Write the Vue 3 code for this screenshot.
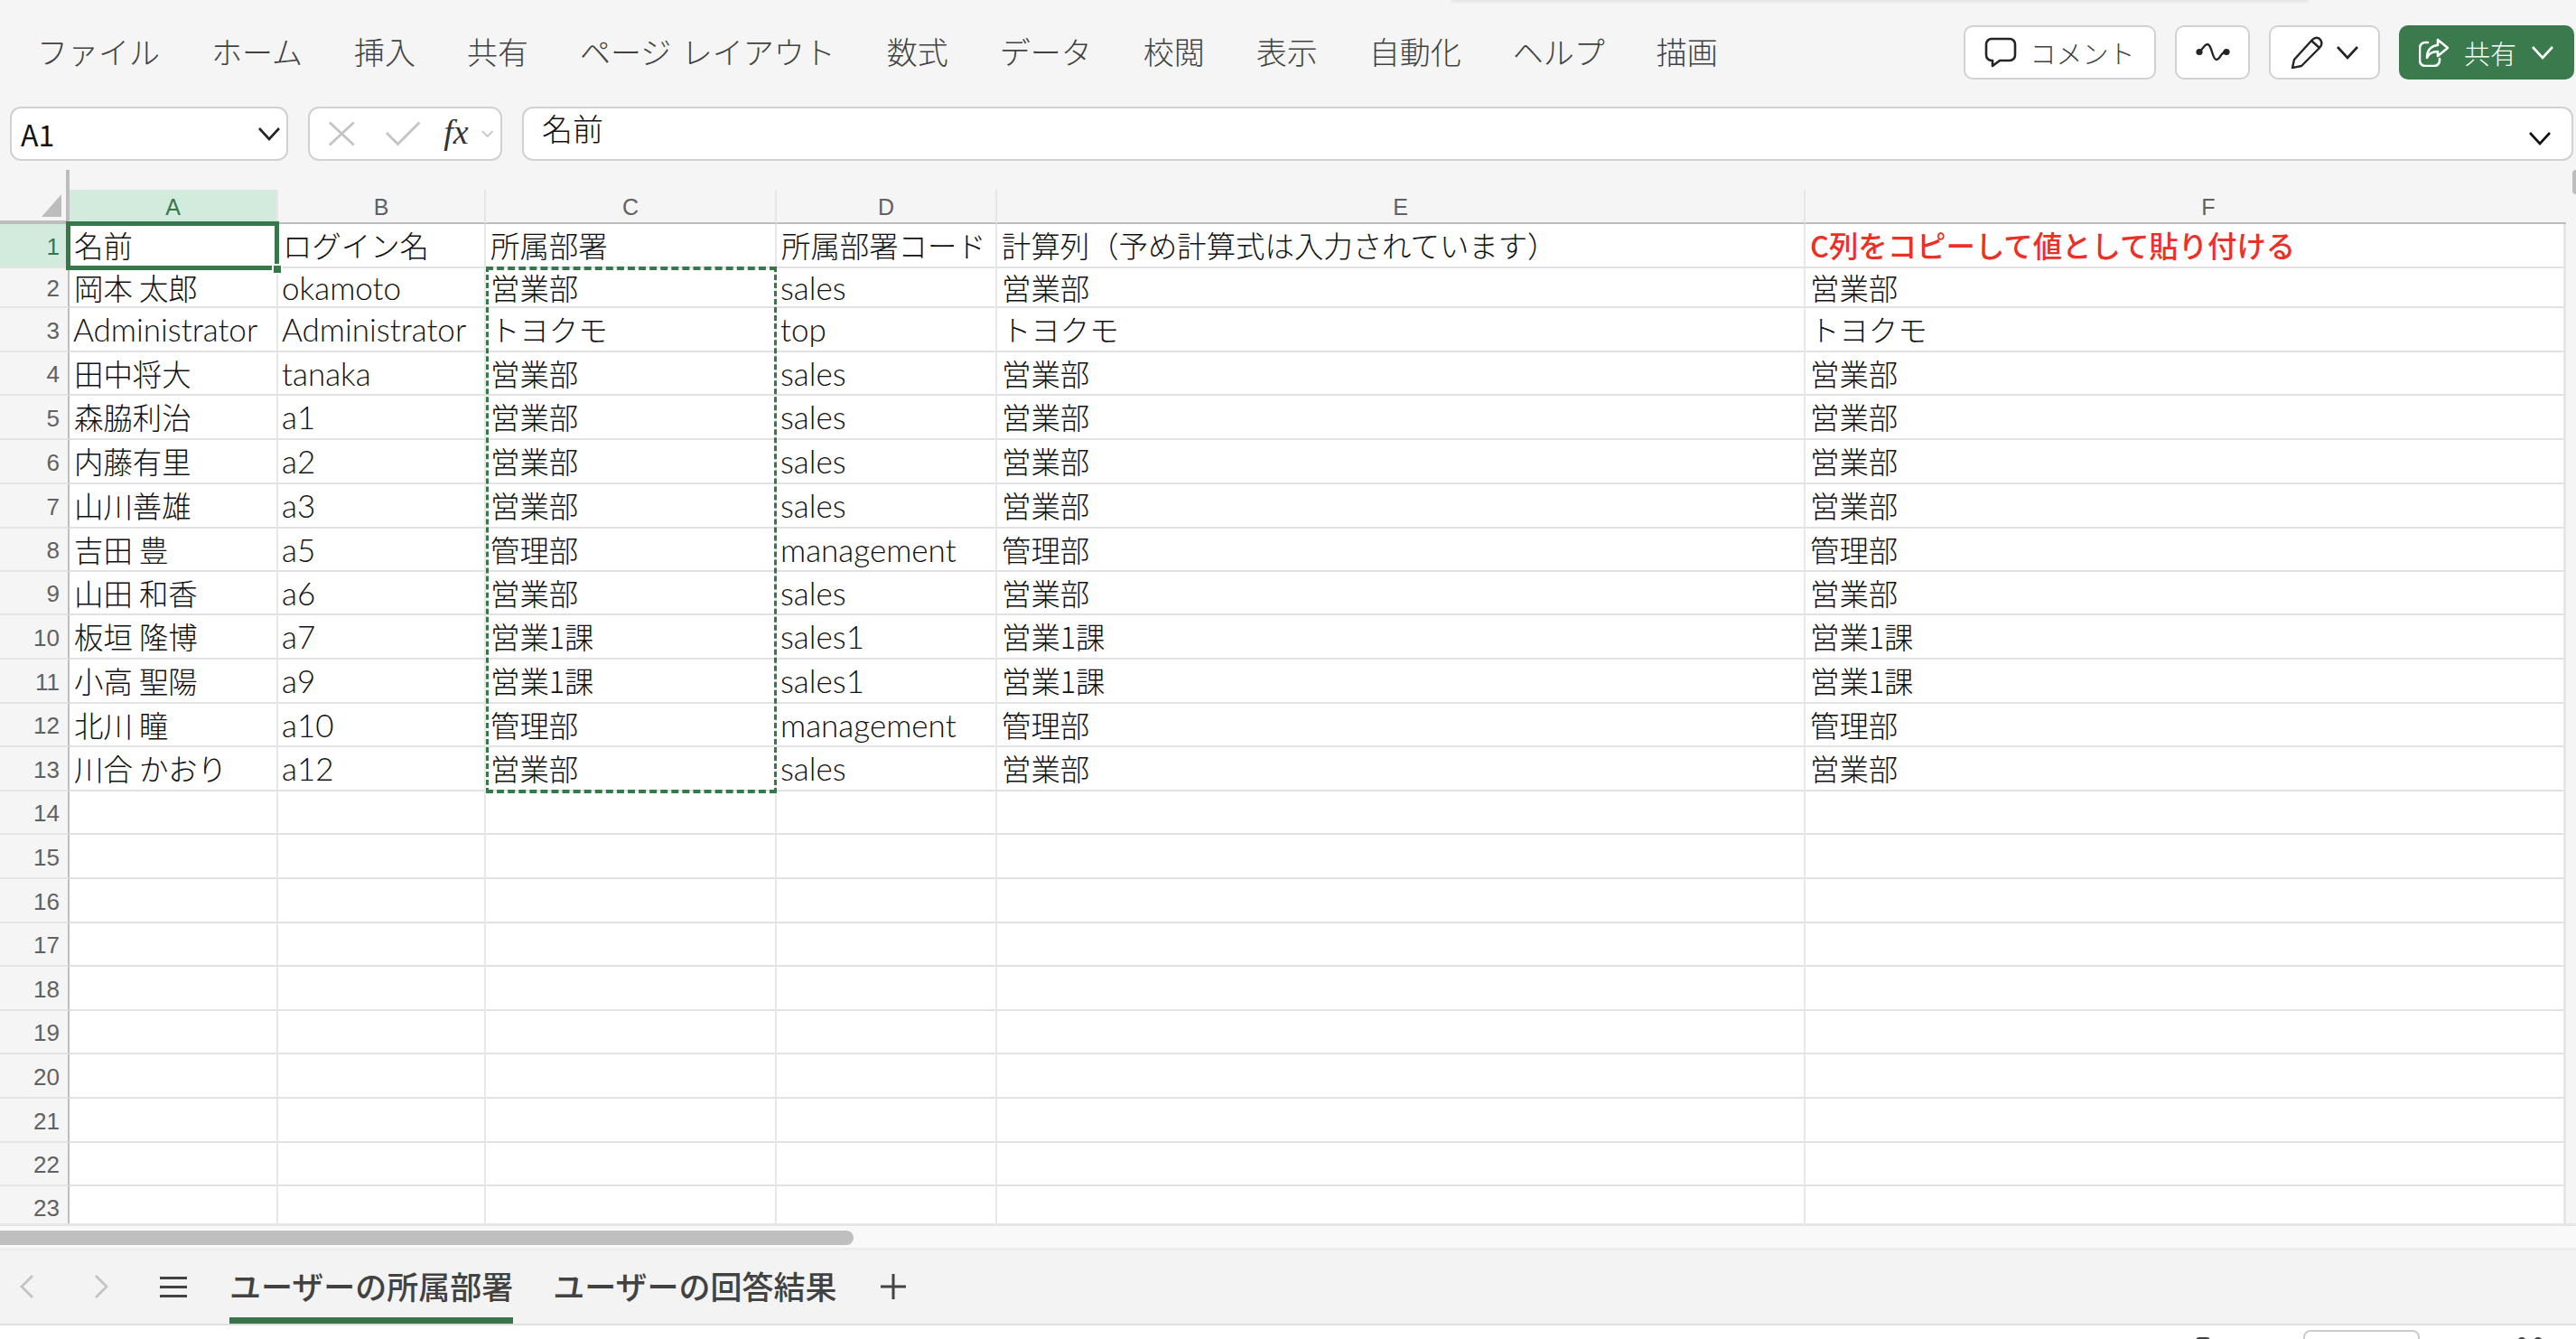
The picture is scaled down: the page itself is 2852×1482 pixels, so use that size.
<script setup>
const menus = ['ファイル', 'ホーム', '挿入', '共有', 'ページ レイアウト', '数式', 'データ', '校閲', '表示', '自動化', 'ヘルプ', '描画']
const columns = ['A', 'B', 'C', 'D', 'E', 'F']

const rows = [
  ['名前', 'ログイン名', '所属部署', '所属部署コード', '計算列（予め計算式は入力されています）', 'C列をコピーして値として貼り付ける'],
  ['岡本 太郎', 'okamoto', '営業部', 'sales', '営業部', '営業部'],
  ['Administrator', 'Administrator', 'トヨクモ', 'top', 'トヨクモ', 'トヨクモ'],
  ['田中将大', 'tanaka', '営業部', 'sales', '営業部', '営業部'],
  ['森脇利治', 'a1', '営業部', 'sales', '営業部', '営業部'],
  ['内藤有里', 'a2', '営業部', 'sales', '営業部', '営業部'],
  ['山川善雄', 'a3', '営業部', 'sales', '営業部', '営業部'],
  ['吉田 豊', 'a5', '管理部', 'management', '管理部', '管理部'],
  ['山田 和香', 'a6', '営業部', 'sales', '営業部', '営業部'],
  ['板垣 隆博', 'a7', '営業1課', 'sales1', '営業1課', '営業1課'],
  ['小高 聖陽', 'a9', '営業1課', 'sales1', '営業1課', '営業1課'],
  ['北川 瞳', 'a10', '管理部', 'management', '管理部', '管理部'],
  ['川合 かおり', 'a12', '営業部', 'sales', '営業部', '営業部'],
]

const rowNumbers = Array.from({ length: 23 }, (_, i) => i + 1)

function cellText(r, c) {
  return rows[r - 1] ? rows[r - 1][c] : ''
}

function isLatin(text) {
  return /^[\x00-\x7f]+$/.test(text)
}
</script>

<template>
  <div class="app">
    <span class="top-shadow"></span>
    <header class="topbar">
      <nav class="menu">
        <span v-for="m in menus" :key="m" class="menu-item">{{ m }}</span>
      </nav>
      <div class="actions">
        <button class="btn comment-btn">
          <svg width="36" height="34" viewBox="0 0 36 34" fill="none" stroke="#242424" stroke-width="2.6" stroke-linejoin="round">
            <path d="M8 2h20a6 6 0 0 1 6 6v12a6 6 0 0 1-6 6H17l-8 6v-6H8a6 6 0 0 1-6-6V8a6 6 0 0 1 6-6z" />
          </svg>
          <span>コメント</span>
        </button>
        <button class="btn wave-btn">
          <svg width="38" height="20" viewBox="0 0 38 20" fill="none" stroke="#242424" stroke-width="2.4" stroke-linecap="round">
            <path d="M4 9C8 7 9 1 13 1c5 0 5 17 10 17 4 0 5-9 11-9" />
            <circle cx="4" cy="9.5" r="3.6" fill="#242424" stroke="none" />
            <circle cx="34" cy="9.5" r="3.6" fill="#242424" stroke="none" />
          </svg>
        </button>
        <button class="btn pencil-btn">
          <svg width="38" height="36" viewBox="0 0 38 36" fill="none" stroke="#242424" stroke-width="2.4" stroke-linejoin="round">
            <path d="M2 35l2-9L24 4c3-3 7-3 9 0s2 6-1 9L12 33z" />
            <path d="M23 5l9 8" />
          </svg>
          <svg class="chev" width="26" height="16" viewBox="0 0 26 16" fill="none" stroke="#242424" stroke-width="2.6">
            <path d="M2 2l11 12L24 2" />
          </svg>
        </button>
        <button class="btn share-btn">
          <svg width="34" height="32" viewBox="0 0 34 32" fill="none" stroke="#fff" stroke-width="2.6" stroke-linejoin="round" stroke-linecap="round">
            <path d="M10 5H7a6 6 0 0 0-6 6v14a6 6 0 0 0 6 6h10a6 6 0 0 0 6-6v-2" />
            <path d="M21 2l11 9-11 9v-5c-6 0-10 2-12 7 0-8 4-13 12-14z" />
          </svg>
          <span>共有</span>
          <svg class="chev" width="26" height="16" viewBox="0 0 26 16" fill="none" stroke="#fff" stroke-width="2.6">
            <path d="M2 2l11 12L24 2" />
          </svg>
        </button>
      </div>
    </header>

    <div class="formula-bar">
      <div class="name-box">
        <span>A1</span>
        <svg width="26" height="16" viewBox="0 0 26 16" fill="none" stroke="#242424" stroke-width="2.6">
          <path d="M2 2l11 12L24 2" />
        </svg>
      </div>
      <div class="fx-box">
        <svg width="32" height="30" viewBox="0 0 32 30" fill="none" stroke="#c4c4c4" stroke-width="3">
          <path d="M2 2l28 26M30 2L2 28" />
        </svg>
        <svg class="check" width="40" height="28" viewBox="0 0 40 28" fill="none" stroke="#c4c4c4" stroke-width="3">
          <path d="M1 13l13 13L39 1" />
        </svg>
        <span class="fx">fx</span>
        <svg width="14" height="8" viewBox="0 0 14 8" fill="none" stroke="#c8c8c8" stroke-width="2">
          <path d="M1 1l6 6 6-6" />
        </svg>
      </div>
      <div class="formula-box">
        <span>名前</span>
        <svg width="26" height="16" viewBox="0 0 26 16" fill="none" stroke="#111" stroke-width="2.6">
          <path d="M2 2l11 12L24 2" />
        </svg>
      </div>
    </div>

    <div class="sheet-area">
      <div class="sheet">
        <div class="corner">
          <svg width="22" height="25" viewBox="0 0 22 25"><path d="M22 0v25H0z" fill="#bdbdbd" /></svg>
        </div>
        <div
          v-for="(col, i) in columns"
          :key="col"
          class="col-head"
          :class="{ active: i === 0, last: i === 5 }"
          :style="{ gridColumn: i + 2 }"
        >{{ col }}</div>

        <template v-for="r in rowNumbers" :key="r">
          <div class="row-head" :class="{ active: r === 1 }" :style="{ gridRow: r + 2 }">{{ r }}</div>
          <div
            v-for="(col, c) in columns"
            :key="col"
            class="cell"
            :class="{ latin: isLatin(cellText(r, c)), alert: r === 1 && c === 5, last: c === 5 }"
            :style="{ gridRow: r + 2, gridColumn: c + 2 }"
          >{{ cellText(r, c) }}</div>
        </template>

        <div class="selection">
          <span class="handle"></span>
        </div>
        <div class="copy-range"></div>
      </div>
      <div class="v-scroll"><span class="v-thumb"></span></div>
    </div>

    <div class="h-scroll"><span class="h-thumb"></span></div>

    <div class="tabbar">
      <svg class="nav-prev" width="16" height="26" viewBox="0 0 16 26" fill="none" stroke="#c4c4c4" stroke-width="2.8">
        <path d="M14 1L2 13l12 12" />
      </svg>
      <svg class="nav-next" width="16" height="26" viewBox="0 0 16 26" fill="none" stroke="#c4c4c4" stroke-width="2.8">
        <path d="M2 1l12 12L2 25" />
      </svg>
      <svg class="burger" width="30" height="24" viewBox="0 0 30 24" fill="#424242">
        <path d="M0 1h30v3H0zM0 11h30v3H0zM0 21h30v3H0z" />
      </svg>
      <div class="tab current">ユーザーの所属部署</div>
      <div class="tab">ユーザーの回答結果</div>
      <svg class="plus" width="28" height="28" viewBox="0 0 28 28" fill="#424242">
        <path d="M12.5 0h3v28h-3zM0 12.5h28v3H0z" />
      </svg>
    </div>

    <footer class="statusbar">
      <span class="status-bit"></span>
      <span class="status-box"></span>
      <span class="status-dots"><i></i><i></i></span>
    </footer>
  </div>
</template>

<style>
html, body {
  margin: 0;
  background: #fff;
}
</style>

<style scoped>
.app {
  position: relative;
  width: 2852px;
  height: 1482px;
  overflow: hidden;
  background: #f5f5f5;
  display: flex;
  flex-direction: column;
  font-family: "Noto Sans CJK JP", "Liberation Sans", sans-serif;
  font-weight: 300;
  color: #111;
}

.top-shadow {
  position: absolute;
  top: -2px;
  left: 1607px;
  width: 948px;
  height: 2px;
  box-shadow: 0 1px 4px rgba(0, 0, 0, 0.18);
}

.topbar {
  height: 118px;
  flex: none;
  display: flex;
  align-items: flex-start;
  justify-content: space-between;
}

.menu {
  display: flex;
  gap: 57px;
  padding: 37px 0 0 41px;
  font-size: 34px;
  line-height: 40px;
  word-spacing: 4px;
  color: #424242;
  white-space: nowrap;
}

.actions {
  display: flex;
  gap: 21px;
  padding: 28px 2px 0 0;
}

.btn {
  height: 60px;
  box-sizing: border-box;
  background: #fff;
  border: 2px solid #d1d1d1;
  border-radius: 10px;
  display: flex;
  align-items: center;
  justify-content: center;
  font: inherit;
  font-size: 29px;
  color: #424242;
  padding: 0;
}

.comment-btn {
  width: 213px;
  gap: 14px;
}

.wave-btn {
  width: 83px;
}

.pencil-btn {
  width: 123px;
  gap: 12px;
}

.share-btn {
  width: 194px;
  gap: 16px;
  background: #3a7a4c;
  border-color: #3a7a4c;
  color: #fff;
}

.formula-bar {
  height: 60px;
  flex: none;
  display: flex;
  gap: 22px;
  padding: 0 3px 0 11px;
  margin-bottom: 10px;
}

.name-box,
.fx-box,
.formula-box {
  box-sizing: border-box;
  background: #fff;
  border: 2px solid #d1d1d1;
  border-radius: 12px;
  display: flex;
}

.name-box {
  width: 308px;
  align-items: center;
  justify-content: space-between;
  padding: 0 6px 0 10px;
  font-size: 32px;
  font-weight: 400;
}

.fx-box {
  width: 215px;
  align-items: center;
  padding: 0 8px 0 20px;
}

.check {
  margin-left: 33px;
}

.fx {
  margin: -4px 14px 0 26px;
  font-family: "Liberation Serif", serif;
  font-style: italic;
  font-size: 38px;
  line-height: 1;
  color: #333;
}

.formula-box {
  flex: 1;
  align-items: flex-start;
  justify-content: space-between;
  padding: 1px 22px 0 20px;
  font-size: 34px;
  line-height: 42px;
}

.formula-box svg {
  margin-top: 24px;
}

.sheet-area {
  height: 1166px;
  flex: none;
  display: flex;
}

.sheet {
  position: relative;
  display: grid;
  width: 2841px;
  height: 1166px;
  grid-template-columns: 77px 231px 230px 322px 244px 895px 842px;
  grid-template-rows:
    22px 38px 49px 44px 49px 48px 49px 49px 49px 48px 48px 49px 49px 48px 49px 48px 49px 49px 48px 49px 48px 49px 49px 48px 48px;
  overflow: hidden;
  border-bottom: 0;
}

.corner {
  grid-column: 1;
  grid-row: 1 / span 2;
  box-sizing: border-box;
  border-right: 4px solid #bdbdbd;
  border-bottom: 4px solid #bdbdbd;
  display: flex;
  align-items: flex-end;
  justify-content: flex-end;
  padding: 0 5px 4px 0;
}

.col-head {
  grid-row: 2;
  box-sizing: border-box;
  border-right: 2px solid #e6e6e6;
  border-bottom: 2px solid #bdbdbd;
  display: flex;
  align-items: center;
  justify-content: center;
  padding-top: 2px;
  font-family: "Liberation Sans", sans-serif;
  font-weight: 400;
  font-size: 25px;
  color: #616161;
}

.col-head.last {
  border-right: 0;
  padding-left: 50px;
}

.col-head.active {
  background: #d3ebdd;
  color: #37784a;
}

.row-head {
  grid-column: 1;
  box-sizing: border-box;
  border-right: 2px solid #bdbdbd;
  border-bottom: 2px solid #e4e4e4;
  display: flex;
  align-items: center;
  justify-content: flex-end;
  padding: 3px 9px 0 0;
  font-family: "Liberation Sans", sans-serif;
  font-weight: 400;
  font-size: 26px;
  color: #616161;
}

.row-head.active {
  background: #d3ebdd;
  color: #37784a;
}

.cell {
  box-sizing: border-box;
  background: #fff;
  border-right: 2px solid #e8e8e8;
  border-bottom: 2px solid #e2e2e2;
  display: flex;
  align-items: center;
  padding-left: 5px;
  font-size: 32.4px;
  line-height: 1;
  white-space: nowrap;
}

.cell.last {
  border-right: 3px solid #e6e6e6;
}

.cell.latin {
  padding-left: 4px;
  font-family: Lato, "Noto Sans CJK JP", sans-serif;
  font-size: 35px;
}

.cell.alert {
  color: #ee2f25;
  font-weight: 500;
}

.selection {
  position: absolute;
  grid-column: 2 / 3;
  grid-row: 3 / 4;
  top: -3px;
  left: -4px;
  right: -1px;
  bottom: -2px;
  border: 5px solid #37784a;
  pointer-events: none;
}

.handle {
  position: absolute;
  right: -7px;
  bottom: -8px;
  width: 8px;
  height: 8px;
  background: #37784a;
  outline: 2px solid #fff;
}

.copy-range {
  position: absolute;
  grid-column: 4 / 5;
  grid-row: 4 / 16;
  top: -2px;
  left: 0;
  right: 0;
  bottom: -2px;
  border-style: dashed;
  border-color: #37784a;
  border-width: 4px 3px;
  pointer-events: none;
}

.v-scroll {
  flex: 1;
  position: relative;
}

.v-thumb {
  position: absolute;
  top: 0;
  right: 0;
  width: 4px;
  height: 27px;
  background: #bdbdbd;
  border-radius: 4px 0 0 4px;
}

.h-scroll {
  height: 30px;
  flex: none;
  box-sizing: border-box;
  background: #f9f9f9;
  border-top: 3px solid #e6e6e6;
  border-bottom: 3px solid #ececec;
  padding-top: 5px;
}

.h-thumb {
  display: block;
  width: 945px;
  height: 16px;
  background: #bfbfbf;
  border-radius: 0 8px 8px 0;
}

.tabbar {
  height: 83px;
  flex: none;
  box-sizing: border-box;
  background: #f3f3f3;
  border-bottom: 2px solid #e0e0e0;
  display: flex;
  align-items: flex-start;
  padding: 27px 0 0 22px;
}

.nav-next {
  margin-left: 66px;
}

.burger {
  margin: 1px 0 0 57px;
}

.tab {
  margin: -10px 0 0 47px;
  font-size: 35px;
  line-height: 44px;
  font-weight: 500;
  color: #424242;
  position: relative;
  white-space: nowrap;
}

.tab.current::after {
  content: '';
  position: absolute;
  left: 0;
  right: 0;
  top: 57px;
  height: 7px;
  background: #3a734b;
}

.tab + .tab {
  margin-left: 44px;
}

.plus {
  margin: -1px 0 0 48px;
}

.statusbar {
  flex: 1;
  background: #fff;
  display: flex;
  align-items: flex-start;
}

.status-bit {
  margin: 13px 0 0 2431px;
  width: 16px;
  height: 6px;
  background: #424242;
  border-radius: 4px 4px 0 0;
}

.status-box {
  margin: 5px 0 0 103px;
  width: 129px;
  height: 20px;
  box-sizing: border-box;
  border: 2px solid #ccc;
  border-radius: 8px;
  background: #fff;
}

.status-dots {
  margin: 13px 0 0 108px;
  display: flex;
  gap: 8px;
}

.status-dots i {
  display: block;
  width: 10px;
  height: 6px;
  background: #424242;
  border-radius: 5px 5px 0 0;
}
</style>
